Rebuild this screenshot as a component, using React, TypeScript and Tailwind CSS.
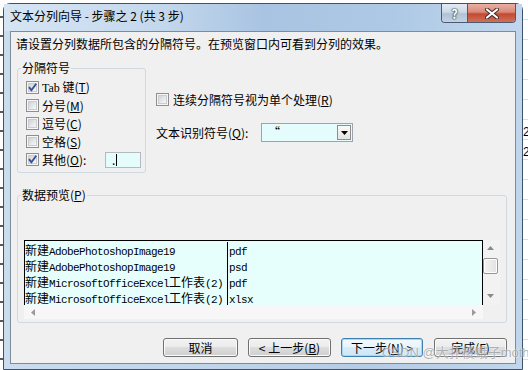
import React from "react";

const ui = "font-['Noto_Sans_CJK_SC',sans-serif]";

// mnemonic letter, underlined like the Win32 accelerator keys
function Mn({ c }: { c: string }) {
  return <span className="underline decoration-1 underline-offset-[1px]">{c}</span>;
}

function CheckBox({ checked = false }: { checked?: boolean }) {
  return (
    <span className="grid h-[13px] w-[13px] shrink-0 place-items-center border border-[#8f8f8f] bg-[#f6f6f6]">
      <span className="col-start-1 row-start-1 h-[9px] w-[9px] border border-[#c9cdd2] bg-gradient-to-br from-[#cfd3d8] to-[#f8f8f8]" />
      {checked && (
        <svg className="col-start-1 row-start-1" width="11" height="11" viewBox="0 0 11 11">
          <path d="M2 5.2 L4.4 8.2 L9.2 1.8" fill="none" stroke="#33509a" strokeWidth="1.9" />
        </svg>
      )}
    </span>
  );
}

// preview text: CJK in a 12px sans, latin in a narrow serif mono like SimSun
function Cell({ text }: { text: string }) {
  const parts = text.split(/([\u4e00-\u9fff]+)/).filter(Boolean);
  return (
    <div className="h-[16px] whitespace-nowrap leading-[16px]">
      {parts.map((p, i) =>
        /[\u4e00-\u9fff]/.test(p) ? (
          <span key={i} className="font-['Noto_Sans_CJK_SC',sans-serif] text-[12px]">
            {p}
          </span>
        ) : (
          <span key={i} className="font-['Liberation_Mono',monospace] text-[11px] tracking-[-0.6px]">
            {p}
          </span>
        )
      )}
    </div>
  );
}

function Btn({
  w,
  ml,
  focus = false,
  children,
}: {
  w: string;
  ml: string;
  focus?: boolean;
  children: React.ReactNode;
}) {
  return (
    <div
      className={`${w} ${ml} flex h-[19px] items-center justify-center rounded-[3px] border text-[12px] leading-[14px] text-black ${
        focus
          ? "border-[#3c7fb1] bg-[linear-gradient(#f3f9fd_0%,#e9f4fb_50%,#d8ecf9_50%,#cde6f7_100%)] shadow-[inset_0_0_0_1px_#a9d7f3]"
          : "border-[#707070] bg-[linear-gradient(#f2f2f2_0%,#ebebeb_50%,#dddddd_50%,#cfcfcf_100%)] shadow-[inset_0_0_0_1px_#fbfbfb]"
      }`}
    >
      {children}
    </div>
  );
}

function Preview() {
  const rows = [
    ["新建AdobePhotoshopImage19", "pdf"],
    ["新建AdobePhotoshopImage19", "psd"],
    ["新建MicrosoftOfficeExcel工作表(2)", "pdf"],
    ["新建MicrosoftOfficeExcel工作表(2)", "xlsx"],
  ];
  return (
    <div className="flex w-[476px] flex-col">
      <div className="flex h-[65px]">
        <div className="flex w-[459px] overflow-hidden border-x border-t border-black bg-[#e6fffd] pt-[1px] text-black">
          <div className="w-[203px] border-r border-black">
            {rows.map((r, i) => (
              <Cell key={i} text={r[0]} />
            ))}
          </div>
          <div className="flex-1 pl-[1px]">
            {rows.map((r, i) => (
              <Cell key={i} text={r[1]} />
            ))}
          </div>
        </div>
        {/* vertical scrollbar */}
        <div className="flex w-[17px] flex-col items-start bg-[#f2f2f2] pt-[6px]">
          <svg className="ml-[4px]" width="7" height="4" viewBox="0 0 7 4">
            <path d="M0 4 L3.5 0 L7 4 Z" fill="#8a8a8a" />
          </svg>
          <div className="mt-[8px] h-[16px] w-[15px] rounded-[2px] border border-[#979797] bg-[linear-gradient(90deg,#f3f3f3,#e2e2e2)] shadow-[inset_0_0_0_1px_#fdfdfd]" />
          <svg className="ml-[4px] mt-[20px]" width="7" height="4" viewBox="0 0 7 4">
            <path d="M0 0 L3.5 4 L7 0 Z" fill="#8a8a8a" />
          </svg>
        </div>
      </div>
      {/* horizontal scrollbar */}
      <div className="flex h-[14px]">
        <div className="flex w-[459px] items-center justify-between bg-[#f7f7f7] pl-[7px] pr-[7px]">
          <svg width="4" height="7" viewBox="0 0 4 7">
            <path d="M4 0 L0 3.5 L4 7 Z" fill="#9a9a9a" />
          </svg>
          <svg width="4" height="7" viewBox="0 0 4 7">
            <path d="M0 0 L4 3.5 L0 7 Z" fill="#9a9a9a" />
          </svg>
        </div>
        <div className="w-[17px] bg-[#f0f0f0]" />
      </div>
    </div>
  );
}

function Window() {
  return (
    <div
      className={`${ui} relative mt-[3px] flex h-[367px] w-[520px] shrink-0 flex-col rounded-t-[7px] border border-[#3f5269] bg-[linear-gradient(90deg,#cadcee_0%,#bfd5ea_40%,#b4cce6_70%,#c0d6ec_100%)]`}
    >
      {/* title bar */}
      <div className="flex h-[27px] items-start bg-[linear-gradient(90deg,#d6e5f3_0%,#c4d8ed_30%,#a9c4e2_50%,#aec9e5_75%,#c2d7ed_100%)] pl-[6px] pr-[6px]">
        <div className="mt-[4px] text-[12px] leading-[16px] text-black">
          文本分列向导 - 步骤之 2 (共 3 步)
        </div>
        <div className="ml-auto flex h-[19px] overflow-hidden rounded-b-[4px] border border-t-0 border-[#4a5b70]">
          <div className="flex w-[26px] items-center justify-center border-r border-[#4a5b70] bg-[linear-gradient(#e3ebf3_0%,#cdd9e6_45%,#afc2d6_55%,#c4d3e2_100%)] text-[13px] font-bold leading-[13px] text-white [text-shadow:0_0_1px_#2c3a4a,0_0_1px_#2c3a4a,0_0_2px_#2c3a4a]">
            ?
          </div>
          <div className="flex w-[47px] items-center justify-center bg-[linear-gradient(#eab0a2_0%,#d98a78_45%,#c44a32_55%,#d0705a_100%)]">
            <svg width="14" height="11" viewBox="0 0 14 11">
              <path d="M2 1.5 L12 9.5 M12 1.5 L2 9.5" stroke="#3b2a28" strokeWidth="4" strokeLinecap="round" />
              <path d="M2 1.5 L12 9.5 M12 1.5 L2 9.5" stroke="#ffffff" strokeWidth="2.2" strokeLinecap="round" />
            </svg>
          </div>
        </div>
      </div>

      {/* client area */}
      <div className="ml-[6px] flex h-[333px] w-[506px] flex-col border border-[#7d8b9b] bg-[#f0f0f0] pl-[5px] pt-[5px] text-[12px] text-black">
        <p className="h-[14px] leading-[14px]">
          请设置分列数据所包含的分隔符号。在预览窗口内可看到分列的效果。
        </p>

        <div className="mt-[11px] flex">
          <fieldset className="ml-[1px] h-[111px] w-[129px] rounded-[3px] border border-[#d0d9df] pl-[8px] pt-[7px]">
            <legend className="ml-[-5px] px-[1px] leading-[12px]">分隔符号</legend>
            <div className="flex flex-col gap-[5px]">
              <label className="flex h-[13px] items-center gap-[3px] leading-[13px]">
                <CheckBox checked />
                <span>
                  <span className="font-['Liberation_Serif',serif] text-[12px]">Tab</span> 键(<Mn c="T" />)
                </span>
              </label>
              <label className="flex h-[13px] items-center gap-[3px] leading-[13px]">
                <CheckBox />
                <span>分号(<Mn c="M" />)</span>
              </label>
              <label className="flex h-[13px] items-center gap-[3px] leading-[13px]">
                <CheckBox />
                <span>逗号(<Mn c="C" />)</span>
              </label>
              <label className="flex h-[13px] items-center gap-[3px] leading-[13px]">
                <CheckBox />
                <span>空格(<Mn c="S" />)</span>
              </label>
              <label className="flex h-[13px] items-center gap-[3px] leading-[13px]">
                <CheckBox checked />
                <span className="w-[60px]">其他(<Mn c="O" />):</span>
                <span className="flex h-[16px] w-[36px] items-center border border-[#b5b9c0] bg-[#e4fcfb] pl-[6px] text-[12px] leading-[12px]">
                  .<span className="ml-[1px] h-[12px] w-[1px] bg-black" />
                </span>
              </label>
            </div>
          </fieldset>

          <div className="ml-[10px] flex flex-col pt-[31px]">
            <label className="flex h-[13px] items-center gap-[4px] leading-[13px]">
              <CheckBox />
              <span>连续分隔符号视为单个处理(<Mn c="R" />)</span>
            </label>
            <div className="mt-[17px] flex h-[19px] items-center">
              <span className="w-[105px] leading-[14px]">文本识别符号(<Mn c="Q" />):</span>
              <div className="flex h-[19px] w-[92px] border border-[#9ea3aa] bg-[#e4fcfb]">
                <span className="flex-1 pl-[6px] text-[12px] leading-[16px]">“</span>
                <div className="my-[1px] mr-[1px] flex w-[14px] items-center justify-center border border-[#8e8e8e] bg-[linear-gradient(#fafafa,#e3e3e3)]">
                  <svg width="7" height="4" viewBox="0 0 7 4">
                    <path d="M0 0 L3.5 4 L7 0 Z" fill="#000" />
                  </svg>
                </div>
              </div>
            </div>
          </div>
        </div>

        <fieldset className="ml-[1px] mt-[16px] h-[134px] w-[490px] rounded-[3px] border border-[#d0d9df] pl-[6px] pt-[39px]">
          <legend className="ml-[-3px] px-[1px] leading-[12px]">
            数据预览(<Mn c="P" />)
          </legend>
          <Preview />
        </fieldset>

        <div className="mt-[15px] flex">
          <Btn w="w-[75px]" ml="ml-[147px]">取消</Btn>
          <Btn w="w-[83px]" ml="ml-[10px]">
            &lt; 上一步(<Mn c="B" />)
          </Btn>
          <Btn w="w-[82px]" ml="ml-[10px]" focus>
            下一步(<Mn c="N" />) &gt;
          </Btn>
          <Btn w="w-[73px]" ml="ml-[11px]">
            完成(<Mn c="F" />)
          </Btn>
        </div>
      </div>

      {/* watermark lying over the buttons */}
      <div className="pointer-events-none absolute left-[378px] top-[341px] whitespace-nowrap font-['Liberation_Sans','Noto_Sans_CJK_SC',sans-serif] text-[13px] leading-[16px] text-[#8e949a]/70 [text-shadow:0_0_2px_#ffffff]">
        CSDN @大扑棱蛾子moth
      </div>
    </div>
  );
}

export default function App() {
  return (
    <div className="flex h-[370px] w-[528px] overflow-hidden bg-white">
      <div className="h-full w-[3px] shrink-0 bg-[repeating-linear-gradient(180deg,#ffffff_0px,#ffffff_16px,#5a5a5a_16px,#5a5a5a_18px,#ffffff_18px,#ffffff_19px)]" />
      <Window />
      <div className="flex w-[5px] shrink-0 flex-col overflow-hidden bg-[repeating-linear-gradient(180deg,#ffffff_0px,#ffffff_19px,#d4dde8_19px,#d4dde8_20px)] pt-[122px] font-['Liberation_Sans',sans-serif] text-[12px] leading-[20px] text-black">
        <span>2</span>
        <span>2</span>
      </div>
    </div>
  );
}
